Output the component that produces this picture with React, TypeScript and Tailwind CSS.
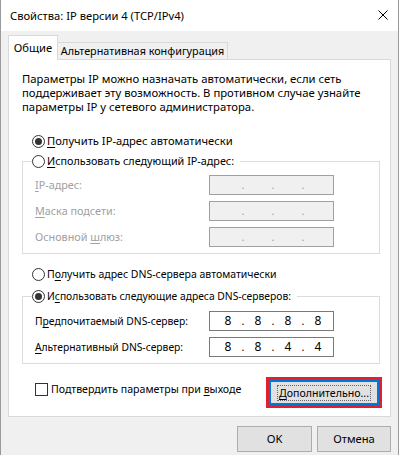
import React from "react";

function Radio({ checked }: { checked?: boolean }) {
  return (
    <span className="w-[13px] h-[13px] rounded-full border border-[#333333] bg-white flex items-center justify-center shrink-0">
      {checked && <span className="w-[7px] h-[7px] rounded-full bg-[#333333]" />}
    </span>
  );
}

// access key letter
function K({ children }: { children: string }) {
  return <span className="underline underline-offset-2">{children}</span>;
}

function IpBox({ values, disabled }: { values: string[]; disabled?: boolean }) {
  return (
    <div
      className={`w-[125px] h-[20px] border flex items-center pl-[3px] ${
        disabled ? "bg-[#f0f0f0] border-[#a0a0a0] text-[#a0a0a0]" : "bg-white border-[#7a7a7a] text-black"
      }`}
    >
      {values.map((v, i) => (
        <React.Fragment key={i}>
          <span className="w-[30px] text-center text-[12px]">{v}</span>
          {i < 3 && <span className="w-0 flex justify-center">.</span>}
        </React.Fragment>
      ))}
    </div>
  );
}

function Field({ label, values, disabled }: { label: React.ReactNode; values: string[]; disabled?: boolean }) {
  return (
    <div className="flex items-center h-[20px]">
      <span className={`w-[186px] pl-[12px] ${disabled ? "text-[#a0a0a0]" : "text-black text-[10.3px]"}`}>{label}</span>
      <IpBox values={values} disabled={disabled} />
    </div>
  );
}

export default function App() {
  const empty = ["", "", "", ""];

  return (
    <div className="w-[399px] h-[455px] bg-[#f0f0f0] border-x border-[#9a9a9a] flex flex-col font-['Noto_Sans',sans-serif] text-[10.8px] leading-[16px] text-black whitespace-nowrap">
      {/* Title bar */}
      <div className="h-[31px] bg-white flex items-center justify-between pl-[9px] pr-[10px] shrink-0">
        <span className="text-[11.2px]">Свойства: IP версии 4 (TCP/IPv4)</span>
        <svg width="10" height="10" viewBox="0 0 10 10" className="mt-[-1px]">
          <path d="M0.5 0.5 L9.5 9.5 M9.5 0.5 L0.5 9.5" stroke="#000" strokeWidth="1" fill="none" />
        </svg>
      </div>

      <div className="px-[7px] pt-[3px] flex flex-col">
        {/* Tabs */}
        <div className="flex items-end h-[25px]">
          <div className="w-[50px] h-[25px] bg-white border-t border-x border-[#d9d9d9] flex items-center justify-center relative z-10 -mb-px pb-[1px] text-[11.2px]">
            Общие
          </div>
          <div className="w-[170px] h-[17px] border-t border-r border-[#d9d9d9] flex items-center justify-center">
            Альтернативная конфигурация
          </div>
        </div>

        {/* Panel */}
        <div className="w-[383px] h-[358px] bg-white border border-[#d9d9d9] flex flex-col">
          <p className="pl-[13px] pt-[12px] leading-[14px] text-[11.3px]">
            Параметры IP можно назначать автоматически, если сеть
            <br />
            поддерживает эту возможность. В противном случае узнайте
            <br />
            параметры IP у сетевого администратора.
          </p>

          <div className="flex items-center gap-[2px] h-[16px] mt-[19px] pl-[23px]">
            <Radio checked />
            <span className="text-[11.2px]">
              <K>П</K>олучить IP-адрес автоматически
            </span>
          </div>

          <fieldset className="ml-[13px] w-[358px] mt-[4px] border border-[#dcdcdc] pb-[6px]">
            <legend className="ml-[9px] pr-[6px]">
              <span className="flex items-center gap-[2px] h-[16px]">
                <Radio />
                <span>
                  <K>И</K>спользовать следующий IP-адрес:
                </span>
              </span>
            </legend>
            <div className="flex flex-col gap-[6px] pt-[6px]">
              <Field label={<><K>I</K>P-адрес:</>} values={empty} disabled />
              <Field label={<><K>М</K>аска подсети:</>} values={empty} disabled />
              <Field label={<>Основной <K>ш</K>люз:</>} values={empty} disabled />
            </div>
          </fieldset>

          <div className="flex items-center gap-[2px] h-[16px] mt-[12px] pl-[23px]">
            <Radio />
            <span className="text-[10.5px]">
              П<K>о</K>лучить адрес DNS-сервера автоматически
            </span>
          </div>

          <fieldset className="ml-[13px] w-[358px] mt-[6px] border border-[#dcdcdc] pb-[6px]">
            <legend className="ml-[9px] pr-[6px]">
              <span className="flex items-center gap-[2px] h-[16px]">
                <Radio checked />
                <span className="text-[10.3px]">
                  И<K>с</K>пользовать следующие адреса DNS-серверов:
                </span>
              </span>
            </legend>
            <div className="flex flex-col gap-[6px] pt-[7px]">
              <Field label={<>П<K>р</K>едпочитаемый DNS-сервер:</>} values={["8", "8", "8", "8"]} />
              <Field label={<><K>А</K>льтернативный DNS-сервер:</>} values={["8", "8", "4", "4"]} />
            </div>
          </fieldset>

          <div className="flex items-start justify-between mt-[13px] pr-[8px]">
            <div className="flex items-center gap-[3px] h-[16px] mt-[4px] pl-[26px]">
              <span className="w-[13px] h-[13px] border border-[#333333] bg-white shrink-0" />
              <span className="text-[10.6px]">
                Подтвердить параметры при <K>в</K>ыходе
              </span>
            </div>
            <div className="w-[116px] h-[31px] border-[3px] border-[#e0202e]">
              <button className="w-full h-full border-2 border-[#0078d7] bg-[#e1e1e1] flex items-center justify-center">
                <span className="border border-dotted border-[#666666] px-[1px] leading-[14px] text-[10.6px]">
                  <K>Д</K>ополнительно...
                </span>
              </button>
            </div>
          </div>
        </div>

        {/* Footer buttons */}
        <div className="flex justify-end gap-[5px] mt-[9px] text-[11.2px]">
          <button className="w-[75px] h-[26px] bg-[#e1e1e1] border border-[#adadad]">OK</button>
          <button className="w-[74px] h-[26px] bg-[#e1e1e1] border border-[#adadad]">Отмена</button>
        </div>
      </div>
    </div>
  );
}
